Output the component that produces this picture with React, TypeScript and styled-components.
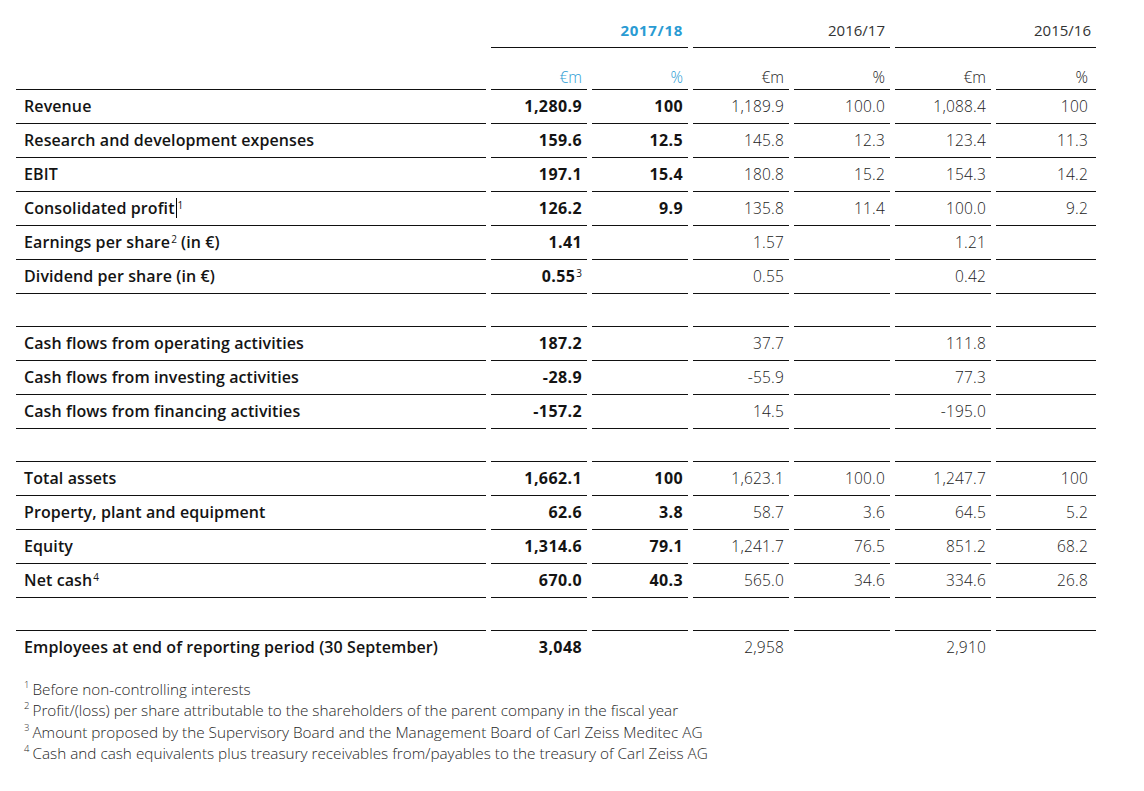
import React from "react";
import styled, { createGlobalStyle, css } from "styled-components";

const GlobalStyle = createGlobalStyle`
  html, body { margin: 0; padding: 0; background: #ffffff; }
  body { font-family: "Open Sans", "DejaVu Sans", sans-serif; color: #1a1a1a; }
`;

const BLUE = "#2a9bd3";
const COLS = "470px repeat(5, 96px) 100px";

const Page = styled.div`
  padding: 0 0 0 16px;
  width: 1144px;
  box-sizing: border-box;
`;

const Grid = styled.div`
  display: grid;
  grid-template-columns: ${COLS};
  column-gap: 5px;
`;

const YearCell = styled.div<{ $current?: boolean }>`
  grid-column: span 2;
  padding: 20px 5px 7px 0;
  line-height: 20px;
  height: 20px;
  text-align: right;
  font-size: 15px;
  border-bottom: 1px solid #111;
  color: ${(p) => (p.$current ? BLUE : "#333")};
  font-weight: ${(p) => (p.$current ? 700 : 400)};
  letter-spacing: ${(p) => (p.$current ? "0.7px" : "0")};
`;

const EmptyCell = styled.div``;

const UnitCell = styled.div<{ $current?: boolean; $last?: boolean }>`
  padding: 19px ${(p) => (p.$last ? "8px" : "5px")} 2px 0;
  line-height: 20px;
  height: 20px;
  text-align: right;
  font-size: 15.5px;
  font-weight: 300;
  color: ${(p) => (p.$current ? BLUE : "#222")};
`;

const lineStyles = css<{ $bottom?: boolean }>`
  border-top: 1px solid #111;
  ${(p) => p.$bottom && "border-bottom: 1px solid #111;"}
  height: 31px;
  padding-bottom: 2px;
  display: flex;
  align-items: center;
  line-height: 20px;
`;

const LabelCell = styled.div<{ $bottom?: boolean }>`
  ${lineStyles}
  padding-left: 8px;
  font-size: 16px;
  font-weight: 600;
  letter-spacing: 0.1px;
  color: #141414;
  white-space: nowrap;
`;

const NumCell = styled.div<{ $bottom?: boolean; $bold?: boolean; $last?: boolean }>`
  ${lineStyles}
  justify-content: flex-end;
  padding-right: ${(p) => (p.$last ? "8px" : "5px")};
  font-size: ${(p) => (p.$bold ? "16px" : "15.5px")};
  font-weight: ${(p) => (p.$bold ? 700 : 300)};
  letter-spacing: ${(p) => (p.$bold ? "0.4px" : "0.2px")};
  color: ${(p) => (p.$bold ? "#141414" : "#222")};
  white-space: nowrap;
`;

const Sup = styled.sup`
  font-size: 10px;
  font-weight: 400;
  line-height: 0;
  position: relative;
  top: -3px;
  margin-left: 1px;
  letter-spacing: 0;
`;

const Caret = styled.span`
  display: inline-block;
  width: 1px;
  height: 20px;
  background: #000;
  vertical-align: middle;
  margin-left: 1px;
`;

const Spacer = styled.div`
  height: 32px;
`;

const Footnotes = styled.div`
  margin-top: 15px;
  padding-left: 8px;
  font-size: 15.3px;
  line-height: 21.3px;
  font-weight: 300;
  color: #1f1f1f;
`;

const Note = styled.div``;

const NoteMark = styled.sup`
  font-size: 9.5px;
  line-height: 0;
  position: relative;
  top: -1px;
  margin-right: 3px;
`;

type Row = {
  label: React.ReactNode;
  v: React.ReactNode[];
};

const groups: Row[][] = [
  [
    { label: "Revenue", v: ["1,280.9", "100", "1,189.9", "100.0", "1,088.4", "100"] },
    { label: "Research and development expenses", v: ["159.6", "12.5", "145.8", "12.3", "123.4", "11.3"] },
    { label: "EBIT", v: ["197.1", "15.4", "180.8", "15.2", "154.3", "14.2"] },
    {
      label: (
        <>
          Consolidated profit
          <Caret />
          <Sup>1</Sup>
        </>
      ),
      v: ["126.2", "9.9", "135.8", "11.4", "100.0", "9.2"],
    },
    {
      label: (
        <>
          Earnings per share<Sup>2</Sup>&nbsp;(in €)
        </>
      ),
      v: ["1.41", "", "1.57", "", "1.21", ""],
    },
    {
      label: "Dividend per share (in €)",
      v: [
        <>
          0.55<Sup>3</Sup>
        </>,
        "",
        "0.55",
        "",
        "0.42",
        "",
      ],
    },
  ],
  [
    { label: "Cash flows from operating activities", v: ["187.2", "", "37.7", "", "111.8", ""] },
    { label: "Cash flows from investing activities", v: ["-28.9", "", "-55.9", "", "77.3", ""] },
    { label: "Cash flows from financing activities", v: ["-157.2", "", "14.5", "", "-195.0", ""] },
  ],
  [
    { label: "Total assets", v: ["1,662.1", "100", "1,623.1", "100.0", "1,247.7", "100"] },
    { label: "Property, plant and equipment", v: ["62.6", "3.8", "58.7", "3.6", "64.5", "5.2"] },
    { label: "Equity", v: ["1,314.6", "79.1", "1,241.7", "76.5", "851.2", "68.2"] },
    {
      label: (
        <>
          Net cash<Sup>4</Sup>
        </>
      ),
      v: ["670.0", "40.3", "565.0", "34.6", "334.6", "26.8"],
    },
  ],
  [
    {
      label: "Employees at end of reporting period (30 September)",
      v: ["3,048", "", "2,958", "", "2,910", ""],
    },
  ],
];

const notes = [
  "Before non-controlling interests",
  "Profit/(loss) per share attributable to the shareholders of the parent company in the fiscal year",
  "Amount proposed by the Supervisory Board and the Management Board of Carl Zeiss Meditec AG",
  "Cash and cash equivalents plus treasury receivables from/payables to the treasury of Carl Zeiss AG",
];

export default function App() {
  return (
    <>
      <GlobalStyle />
      <Page>
        <Grid>
          <EmptyCell />
          <YearCell $current>2017/18</YearCell>
          <YearCell>2016/17</YearCell>
          <YearCell>2015/16</YearCell>
          <EmptyCell />
          <UnitCell $current>€m</UnitCell>
          <UnitCell $current>%</UnitCell>
          <UnitCell>€m</UnitCell>
          <UnitCell>%</UnitCell>
          <UnitCell>€m</UnitCell>
          <UnitCell $last>%</UnitCell>
        </Grid>
        {groups.map((g, gi) => (
          <React.Fragment key={gi}>
            {gi > 0 && <Spacer />}
            <Grid>
              {g.map((r, ri) => {
                const bottom = ri === g.length - 1 && gi < groups.length - 1;
                return (
                  <React.Fragment key={ri}>
                    <LabelCell $bottom={bottom}>{r.label}</LabelCell>
                    {r.v.map((val, ci) => (
                      <NumCell key={ci} $bottom={bottom} $bold={ci < 2} $last={ci === 5}>
                        {val}
                      </NumCell>
                    ))}
                  </React.Fragment>
                );
              })}
            </Grid>
          </React.Fragment>
        ))}
        <Footnotes>
          {notes.map((n, i) => (
            <Note key={i}>
              <NoteMark>{i + 1}</NoteMark>
              {n}
            </Note>
          ))}
        </Footnotes>
      </Page>
    </>
  );
}
